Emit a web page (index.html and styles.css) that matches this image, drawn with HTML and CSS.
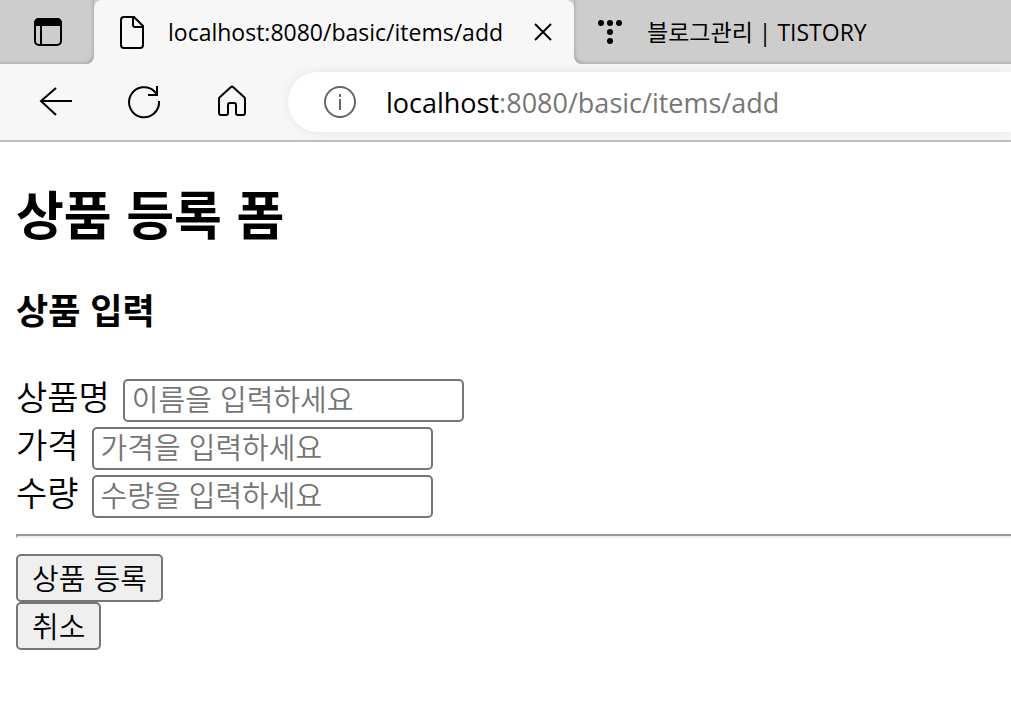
FILE: index.html
```
<!DOCTYPE html>
<html lang="ko">
<head>
  <meta charset="UTF-8">
  <meta name="viewport" content="width=device-width, initial-scale=1.0">
  <title>상품 등록 폼</title>
  <link rel="stylesheet" href="styles.css">
</head>
<body>
  <header class="browser">
    <nav class="tabs">
      <button class="tab-menu" aria-label="Tab actions">
        <svg width="32" height="32" viewBox="0 0 32 32" fill="none" stroke="#000" stroke-width="2">
          <rect x="3" y="3" width="26" height="26" rx="4"/>
          <path d="M3 9V7a4 4 0 0 1 4-4h18a4 4 0 0 1 4 4v2z" fill="#000"/>
          <path d="M9 9v20"/>
        </svg>
      </button>
      <div class="tab active">
        <svg width="28" height="36" viewBox="0 0 28 36" fill="none" stroke="#000" stroke-width="2" stroke-linejoin="round">
          <path d="M6 3h10l9 9v19a3 3 0 0 1-3 3H6a3 3 0 0 1-3-3V6a3 3 0 0 1 3-3z"/>
          <path d="M15 3v8a2 2 0 0 0 2 2h8"/>
        </svg>
        <span class="tab-title">localhost:8080/basic/items/add</span>
        <button class="close" aria-label="Close tab">
          <svg width="18" height="18" viewBox="0 0 18 18" stroke="#000" stroke-width="2">
            <path d="M1 1l16 16M17 1L1 17"/>
          </svg>
        </button>
      </div>
      <div class="tab other">
        <svg width="28" height="28" viewBox="0 0 28 28">
          <circle cx="5" cy="5" r="3"/>
          <circle cx="14" cy="5" r="3"/>
          <circle cx="23" cy="5" r="3"/>
          <circle cx="14" cy="14" r="3"/>
          <circle cx="14" cy="23" r="3"/>
        </svg>
        <span class="tab-title">블로그관리 | TISTORY</span>
      </div>
    </nav>

    <div class="toolbar">
      <button class="tool" aria-label="Back">
        <svg width="40" height="40" viewBox="0 0 40 40" fill="none" stroke="#000" stroke-width="2">
          <path d="M36 19H5M20 6L5 19l15 14"/>
        </svg>
      </button>
      <button class="tool" aria-label="Refresh">
        <svg width="40" height="40" viewBox="0 0 40 40" fill="none" stroke="#000" stroke-width="2">
          <path d="M35 19a15 15 0 1 1-4-9l2 3"/>
          <path d="M33 4v9h-9"/>
        </svg>
      </button>
      <button class="tool" aria-label="Home">
        <svg width="40" height="40" viewBox="0 0 40 40" fill="none" stroke="#000" stroke-width="2" stroke-linejoin="round">
          <path d="M7 17q0-1 1-2L19 5q1-1 2 0l11 10q1 1 1 2v14a2 2 0 0 1-2 2h-5a2 2 0 0 1-2-2v-8a2 2 0 0 0-2-2h-4a2 2 0 0 0-2 2v8a2 2 0 0 1-2 2H9a2 2 0 0 1-2-2z"/>
        </svg>
      </button>
      <div class="address">
        <svg width="32" height="32" viewBox="0 0 32 32" fill="none" stroke="#666" stroke-width="2">
          <circle cx="16" cy="16" r="15"/>
          <path d="M16 13v11M16 8v3"/>
        </svg>
        <span class="url"><b>localhost</b>:8080/basic/items/add</span>
      </div>
    </div>
  </header>

  <main class="page">
    <h2>상품 등록 폼</h2>
    <h3>상품 입력</h3>

    <form>
      <div class="field">
        <label for="itemName">상품명</label>
        <input type="text" id="itemName" name="itemName" placeholder="이름을 입력하세요">
      </div>
      <div class="field">
        <label for="price">가격</label>
        <input type="text" id="price" name="price" placeholder="가격을 입력하세요">
      </div>
      <div class="field">
        <label for="quantity">수량</label>
        <input type="text" id="quantity" name="quantity" placeholder="수량을 입력하세요">
      </div>

      <hr>

      <div class="actions">
        <button type="submit">상품 등록</button>
        <button type="button">취소</button>
      </div>
    </form>
  </main>
</body>
</html>
```
FILE: styles.css
```
* { box-sizing: border-box; }

body {
  margin: 0;
  background: #fff;
  color: #000;
  font-family: "Noto Sans CJK KR", sans-serif;
  font-weight: 350;
  overflow-x: hidden;
}

svg {
  display: block;
  flex: none;
}

/* browser frame */
.browser {
  background: #f7f7f7;
  border-bottom: 2px solid #bebebe;
  font-family: "Open Sans", "Noto Sans CJK KR", sans-serif;
  font-weight: 400;
}

.browser button {
  border: none;
  background: none;
  padding: 0;
}

/* grey on top so it shows behind the rounded corners of the active tab */
.tabs {
  display: flex;
  height: 64px;
  background: linear-gradient(#cdcdcd 50%, #f7f7f7 50%);
}

.browser .tab-menu {
  width: 94px;
  padding-left: 32px;
  background: #cdcdcd;
  border-radius: 0 0 8px 0;
  box-shadow: inset -3px -3px 4px -3px #999;
}

.tab {
  display: flex;
  align-items: center;
  font-size: 23px;
  line-height: 32px;
  white-space: nowrap;
}

.active {
  width: 480px;
  padding: 0 22px 0 24px;
  background: #f7f7f7;
  border-radius: 8px 8px 0 0;
}

.active .tab-title {
  flex: 1;
  margin-left: 22px;
}

.other {
  flex: 1;
  gap: 23px;
  padding-left: 22px;
  background: #cdcdcd;
  border-radius: 0 0 0 8px;
  box-shadow: inset 3px -3px 4px -3px #999;
}

.toolbar {
  display: flex;
  align-items: center;
  gap: 48px;
  height: 76px;
  padding-left: 36px;
  overflow: hidden;
}

.address {
  flex: 1;
  display: flex;
  align-items: center;
  gap: 30px;
  height: 60px;
  margin-left: -12px;
  padding-left: 36px;
  background: #fff;
  border-radius: 30px 0 0 30px;
  box-shadow: 0 0 12px #e4e4e4;
  color: #767676;
  font-size: 27px;
  white-space: nowrap;
}

.url b {
  color: #000;
  font-weight: 400;
}

/* page content */
.page {
  padding: 0 0 16px 16px;
}

h2 {
  margin: 40px 0;
  font-size: 52px;
  line-height: 62px;
}

h3 {
  margin: 42px 0;
  font-size: 35px;
  line-height: 46px;
}

.field {
  display: flex;
  align-items: flex-end;
  gap: 13px;
  height: 48px;
}

.field label {
  align-self: flex-start;
  font-size: 34px;
  line-height: 44px;
}

.field input {
  width: 341px;
  height: 43px;
  padding: 0 7px 6px;
  border: 2px solid #767676;
  border-radius: 5px;
  font-family: inherit;
  font-size: 29px;
  font-weight: inherit;
  line-height: 33px;
}

.field input::placeholder { color: #757575; }

hr {
  margin: 16px 0;
  border: 2px inset #eee;
  border-right: none;
}

.actions {
  display: flex;
  flex-direction: column;
  align-items: flex-start;
}

.actions button {
  height: 48px;
  padding: 0 14px 2px;
  border: 2px solid #767676;
  border-radius: 5px;
  background: #efefef;
  color: #000;
  font-family: inherit;
  font-size: 29px;
  font-weight: inherit;
  line-height: 40px;
}
```
